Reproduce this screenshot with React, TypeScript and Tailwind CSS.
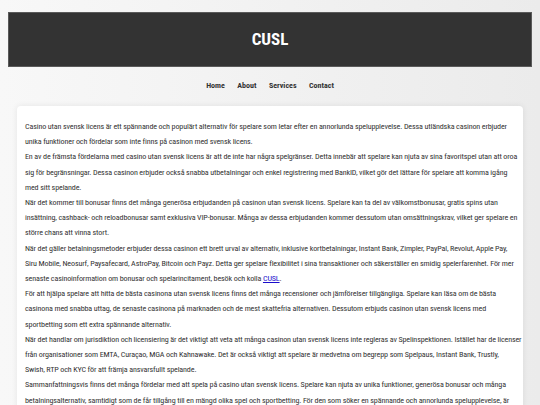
// Each paragraph is split where the original page wraps its lines
const paragraphs: React.ReactNode[][] = [
  [
    'Casino utan svensk licens är ett spännande och populärt alternativ för spelare som letar efter en annorlunda spelupplevelse. Dessa utländska casinon erbjuder',
    'unika funktioner och fördelar som inte finns på casinon med svensk licens.',
  ],
  [
    'En av de främsta fördelarna med casino utan svensk licens är att de inte har några spelgränser. Detta innebär att spelare kan njuta av sina favoritspel utan att oroa',
    'sig för begränsningar. Dessa casinon erbjuder också snabba utbetalningar och enkel registrering med BankID, vilket gör det lättare för spelare att komma igång',
    'med sitt spelande.',
  ],
  [
    'När det kommer till bonusar finns det många generösa erbjudanden på casinon utan svensk licens. Spelare kan ta del av välkomstbonusar, gratis spins utan',
    'insättning, cashback- och reloadbonusar samt exklusiva VIP-bonusar. Många av dessa erbjudanden kommer dessutom utan omsättningskrav, vilket ger spelare en',
    'större chans att vinna stort.',
  ],
  [
    'När det gäller betalningsmetoder erbjuder dessa casinon ett brett urval av alternativ, inklusive kortbetalningar, Instant Bank, Zimpler, PayPal, Revolut, Apple Pay,',
    'Siru Mobile, Neosurf, Paysafecard, AstroPay, Bitcoin och Payz. Detta ger spelare flexibilitet i sina transaktioner och säkerställer en smidig spelerfarenhet. För mer',
    <>
      senaste casinoinformation om bonusar och spelarincitament, besök och kolla{' '}
      <a href="#" className="text-[#1a0dcc] underline">CUSL</a>.
    </>,
  ],
  [
    'För att hjälpa spelare att hitta de bästa casinona utan svensk licens finns det många recensioner och jämförelser tillgängliga. Spelare kan läsa om de bästa',
    'casinona med snabba uttag, de senaste casinona på marknaden och de mest skattefria alternativen. Dessutom erbjuds casinon utan svensk licens med',
    'sportbetting som ett extra spännande alternativ.',
  ],
  [
    'När det handlar om jurisdiktion och licensiering är det viktigt att veta att många casinon utan svensk licens inte regleras av Spelinspektionen. Istället har de licenser',
    'från organisationer som EMTA, Curaçao, MGA och Kahnawake. Det är också viktigt att spelare är medvetna om begrepp som Spelpaus, Instant Bank, Trustly,',
    'Swish, RTP och KYC för att främja ansvarsfullt spelande.',
  ],
  [
    'Sammanfattningsvis finns det många fördelar med att spela på casino utan svensk licens. Spelare kan njuta av unika funktioner, generösa bonusar och många',
    'betalningsalternativ, samtidigt som de får tillgång till en mängd olika spel och sportbetting. För den som söker en spännande och annorlunda spelupplevelse, är',
    'casino utan svensk licens definitivt värt att utforska.',
  ],
]

const nav = ['Home', 'About', 'Services', 'Contact']

export default function App() {
  return (
    <div className="min-h-screen w-full bg-linear-to-r from-[#f8f8f8] to-[#ebebeb] font-['Roboto_Condensed','Liberation_Sans',sans-serif] text-[#333]">
      <div className="px-2 pt-3 pb-6">

        {/* Header */}
        <header className="h-[55px] bg-[#333] border border-[#5a5a5a] flex items-center justify-center">
          <h1 className="text-white text-[17px] font-bold">CUSL</h1>
        </header>

        {/* Nav */}
        <nav className="flex justify-center gap-[12.5px] pt-[13px] pb-[14px]">
          {nav.map((item) => (
            <a key={item} href="#" className="text-[8px] font-bold leading-[12px] text-[#333]">
              {item}
            </a>
          ))}
        </nav>

        {/* Content */}
        <main className="mx-[9px] bg-white rounded-[4px] shadow-[0_0_6px_rgba(0,0,0,0.08)] px-2 pt-[13px] pb-4">
          {paragraphs.map((lines, i) => (
            <p key={i} className="text-[8.1px] leading-[15.2px] tracking-[-0.15px] text-[#333]">
              {lines.map((line, j) => (
                <span key={j} className="block whitespace-nowrap">{line}</span>
              ))}
            </p>
          ))}
        </main>
      </div>
    </div>
  )
}
